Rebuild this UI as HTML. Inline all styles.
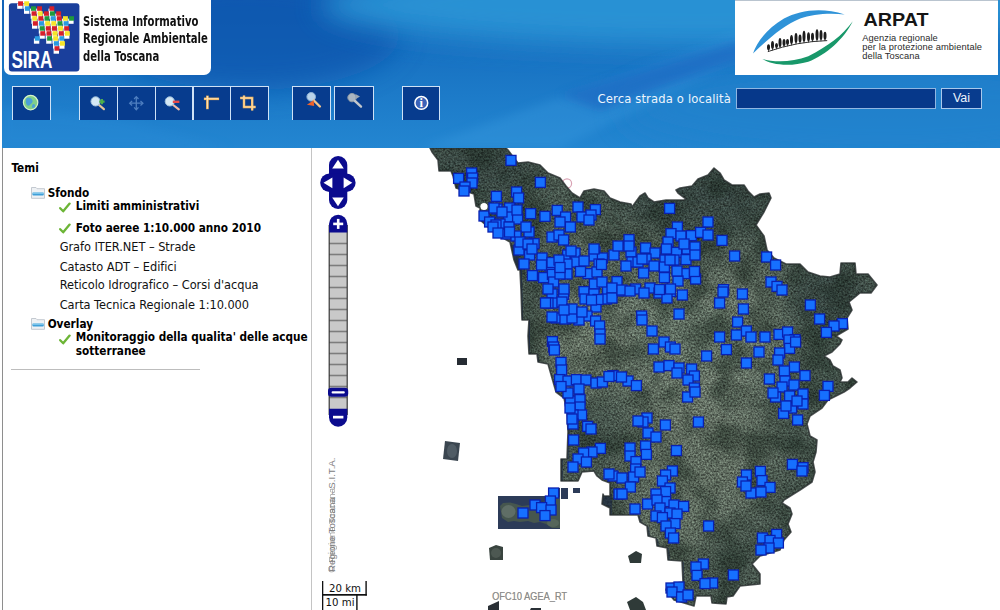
<!DOCTYPE html>
<html lang="it">
<head>
<meta charset="utf-8">
<title>SIRA - Sistema Informativo Regionale Ambientale della Toscana</title>
<style>
html,body{margin:0;padding:0;}
body{width:1000px;height:610px;overflow:hidden;background:#fff;position:relative;font-family:"DejaVu Sans","Liberation Sans",sans-serif;}
#hdr{position:absolute;left:2px;top:0;width:998px;height:148px;overflow:hidden;
 background:#176cc0;}
#hdr .glow{position:absolute;left:0;top:0;width:998px;height:148px;}
#sira{position:absolute;left:2px;top:-6px;width:207px;height:81px;background:#fff;border-radius:7px;}
#sira svg.sl{position:absolute;left:0;top:6px;}
#sira .txt{position:absolute;left:79.4px;top:18.8px;font:bold 14px/17.6px "DejaVu Sans Condensed","Liberation Sans",sans-serif;color:#111;white-space:nowrap;transform-origin:0 0;transform:scaleX(.80);}
#arpat{position:absolute;left:733px;top:0;width:263px;height:74.5px;background:#fff;border-top:1px solid #b9c4cf;box-sizing:border-box;overflow:hidden;}
#arpat svg{position:absolute;left:0;top:0;}
.tb{position:absolute;top:86px;height:32.6px;width:37px;background:#073c8e;border:1px solid #cfe2f6;border-bottom:none;box-sizing:content-box;}
.tb svg{position:absolute;left:0;top:0;}
#srch{position:absolute;left:595.5px;top:91.6px;font:11.6px/14px "DejaVu Sans","Liberation Sans",sans-serif;color:#eef5fd;white-space:nowrap;letter-spacing:0.14px;}
#inp{position:absolute;left:734px;top:88.4px;width:200px;height:20.4px;background:#06388a;border:1px solid #8fb6e2;box-sizing:border-box;}
#vai{position:absolute;left:939px;top:88.4px;width:41px;height:20.4px;background:#083c8e;border:1px solid #a9c9ec;box-sizing:border-box;color:#eef5fd;font:12.5px/18px "Liberation Sans",sans-serif;text-align:center;}
#left{position:absolute;left:2px;top:148px;width:310px;height:462px;border-left:1px solid #8e8e8e;border-right:1px solid #c4c4c4;box-sizing:border-box;background:#fff;}
#left div{position:absolute;white-space:nowrap;color:#000;font-size:11.5px;line-height:14px;}
#left .b{font-weight:bold;font-family:"DejaVu Sans Condensed","DejaVu Sans",sans-serif;font-size:11.7px;}
#left .n{font-family:"DejaVu Sans","Liberation Sans",sans-serif;font-size:11.4px;letter-spacing:-0.05px;color:#111;}
#left svg.ck{position:absolute;}
#left hr{position:absolute;left:8px;top:221px;width:189px;height:1px;border:0;background:#bdbdbd;margin:0;}
#map{position:absolute;left:313px;top:148px;width:687px;height:462px;overflow:hidden;background:#fff;}
#map svg.m{position:absolute;left:0;top:0;}
</style>
</head>
<body>
<div id="hdr">
 <svg class="glow" width="998" height="148" viewBox="2 0 998 148">
  <defs>
   <linearGradient id="g0" x1="0" y1="0" x2="0" y2="1"><stop offset="0" stop-color="#1262b8"/><stop offset=".5" stop-color="#1a76c5"/><stop offset="1" stop-color="#2386d1"/></linearGradient>
   <filter id="bl" x="-20%" y="-60%" width="140%" height="220%"><feGaussianBlur stdDeviation="14"/></filter>
   <filter id="bs" x="-20%" y="-60%" width="140%" height="220%"><feGaussianBlur stdDeviation="5"/></filter>
  </defs>
  <rect x="2" width="998" height="148" fill="url(#g0)"/>
  <ellipse cx="250" cy="35" rx="150" ry="55" fill="#0d54ad" opacity=".75" filter="url(#bl)"/>
  <ellipse cx="700" cy="5" rx="380" ry="42" fill="#2b94d6" opacity=".95" filter="url(#bl)"/>
  <ellipse cx="880" cy="110" rx="260" ry="50" fill="#2083cd" opacity=".7" filter="url(#bl)"/>
  <polygon points="420,148 560,148 780,40 760,25" fill="#3a9be0" opacity=".35" filter="url(#bs)"/>
  <polygon points="560,95 740,40 745,58 600,110" fill="#1558ba" opacity=".45" filter="url(#bs)"/>
  <polygon points="2,105 120,120 230,148 2,148" fill="#2a8cd8" opacity=".35" filter="url(#bs)"/>
 </svg>
 <div id="sira">
  <svg class="sl" width="80" height="76" viewBox="4 0 80 76">
<rect x="8.9" y="3.2" width="70.5" height="68.4" rx="3" fill="#1a3f9c"/>
<rect x="17.2" y="3.6" width="5.4" height="5.2" fill="#fff"/>
<rect x="23.3" y="3.6" width="5.4" height="5.2" fill="#fff"/>
<rect x="24.0" y="8.6" width="5.4" height="5.2" fill="#fff"/>
<rect x="30.1" y="8.6" width="5.4" height="5.2" fill="#fff"/>
<rect x="36.2" y="8.6" width="5.4" height="5.2" fill="#fff"/>
<rect x="48.5" y="8.6" width="5.4" height="5.2" fill="#fff"/>
<rect x="30.7" y="13.6" width="5.4" height="5.2" fill="#fff"/>
<rect x="36.9" y="13.6" width="5.4" height="5.2" fill="#fff"/>
<rect x="43.0" y="13.6" width="5.4" height="5.2" fill="#fff"/>
<rect x="49.1" y="13.6" width="5.4" height="5.2" fill="#fff"/>
<rect x="55.3" y="13.6" width="5.4" height="5.2" fill="#fff"/>
<rect x="31.4" y="18.6" width="5.4" height="5.2" fill="#fff"/>
<rect x="37.5" y="18.6" width="5.4" height="5.2" fill="#fff"/>
<rect x="43.6" y="18.6" width="5.4" height="5.2" fill="#fff"/>
<rect x="49.8" y="18.6" width="5.4" height="5.2" fill="#fff"/>
<rect x="55.9" y="18.6" width="5.4" height="5.2" fill="#fff"/>
<rect x="62.1" y="18.6" width="5.4" height="5.2" fill="#fff"/>
<rect x="68.2" y="18.6" width="5.4" height="5.2" fill="#fff"/>
<rect x="32.0" y="23.5" width="5.4" height="5.2" fill="#fff"/>
<rect x="38.1" y="23.5" width="5.4" height="5.2" fill="#fff"/>
<rect x="44.3" y="23.5" width="5.4" height="5.2" fill="#fff"/>
<rect x="50.4" y="23.5" width="5.4" height="5.2" fill="#fff"/>
<rect x="56.6" y="23.5" width="5.4" height="5.2" fill="#fff"/>
<rect x="62.7" y="23.5" width="5.4" height="5.2" fill="#fff"/>
<rect x="38.8" y="28.5" width="5.4" height="5.2" fill="#fff"/>
<rect x="44.9" y="28.5" width="5.4" height="5.2" fill="#fff"/>
<rect x="51.1" y="28.5" width="5.4" height="5.2" fill="#fff"/>
<rect x="57.2" y="28.5" width="5.4" height="5.2" fill="#fff"/>
<rect x="63.4" y="28.5" width="5.4" height="5.2" fill="#fff"/>
<rect x="39.4" y="33.5" width="5.4" height="5.2" fill="#fff"/>
<rect x="45.6" y="33.5" width="5.4" height="5.2" fill="#fff"/>
<rect x="51.7" y="33.5" width="5.4" height="5.2" fill="#fff"/>
<rect x="57.9" y="33.5" width="5.4" height="5.2" fill="#fff"/>
<rect x="64.0" y="33.5" width="5.4" height="5.2" fill="#fff"/>
<rect x="33.9" y="38.5" width="5.4" height="5.2" fill="#fff"/>
<rect x="46.2" y="38.5" width="5.4" height="5.2" fill="#fff"/>
<rect x="52.4" y="38.5" width="5.4" height="5.2" fill="#fff"/>
<rect x="58.5" y="38.5" width="5.4" height="5.2" fill="#fff"/>
<rect x="53.0" y="43.5" width="5.4" height="5.2" fill="#fff"/>
<rect x="59.1" y="43.5" width="5.4" height="5.2" fill="#fff"/>
<rect x="53.6" y="48.5" width="5.4" height="5.2" fill="#fff"/>
<rect x="18.1" y="1.3" width="4.9" height="4.5" fill="#d6202a"/>
<rect x="24.2" y="1.3" width="4.9" height="4.5" fill="#f6e52a"/>
<rect x="24.9" y="6.3" width="4.9" height="4.5" fill="#2a9be0"/>
<rect x="31.0" y="6.3" width="4.9" height="4.5" fill="#1f9a3c"/>
<rect x="37.1" y="6.3" width="4.9" height="4.5" fill="#d6202a"/>
<rect x="49.4" y="6.3" width="4.9" height="4.5" fill="#d6202a"/>
<rect x="31.6" y="11.3" width="4.9" height="4.5" fill="#d6202a"/>
<rect x="37.8" y="11.3" width="4.9" height="4.5" fill="#f6e52a"/>
<rect x="43.9" y="11.3" width="4.9" height="4.5" fill="#d6202a"/>
<rect x="50.0" y="11.3" width="4.9" height="4.5" fill="#1f9a3c"/>
<rect x="56.2" y="11.3" width="4.9" height="4.5" fill="#d6202a"/>
<rect x="32.3" y="16.2" width="4.9" height="4.5" fill="#f6e52a"/>
<rect x="38.4" y="16.2" width="4.9" height="4.5" fill="#d6202a"/>
<rect x="44.5" y="16.2" width="4.9" height="4.5" fill="#1f9a3c"/>
<rect x="50.7" y="16.2" width="4.9" height="4.5" fill="#2a9be0"/>
<rect x="56.8" y="16.2" width="4.9" height="4.5" fill="#d6202a"/>
<rect x="63.0" y="16.2" width="4.9" height="4.5" fill="#f6e52a"/>
<rect x="69.1" y="16.2" width="4.9" height="4.5" fill="#1f9a3c"/>
<rect x="32.9" y="21.2" width="4.9" height="4.5" fill="#d6202a"/>
<rect x="39.0" y="21.2" width="4.9" height="4.5" fill="#2a9be0"/>
<rect x="45.2" y="21.2" width="4.9" height="4.5" fill="#f6e52a"/>
<rect x="51.3" y="21.2" width="4.9" height="4.5" fill="#f6e52a"/>
<rect x="57.5" y="21.2" width="4.9" height="4.5" fill="#1f9a3c"/>
<rect x="63.6" y="21.2" width="4.9" height="4.5" fill="#2a9be0"/>
<rect x="39.7" y="26.2" width="4.9" height="4.5" fill="#1f9a3c"/>
<rect x="45.8" y="26.2" width="4.9" height="4.5" fill="#d6202a"/>
<rect x="52.0" y="26.2" width="4.9" height="4.5" fill="#d6202a"/>
<rect x="58.1" y="26.2" width="4.9" height="4.5" fill="#f6e52a"/>
<rect x="64.2" y="26.2" width="4.9" height="4.5" fill="#d6202a"/>
<rect x="40.3" y="31.2" width="4.9" height="4.5" fill="#d6202a"/>
<rect x="46.5" y="31.2" width="4.9" height="4.5" fill="#d6202a"/>
<rect x="52.6" y="31.2" width="4.9" height="4.5" fill="#f6e52a"/>
<rect x="58.8" y="31.2" width="4.9" height="4.5" fill="#d6202a"/>
<rect x="64.9" y="31.2" width="4.9" height="4.5" fill="#f6e52a"/>
<rect x="34.8" y="36.2" width="4.9" height="4.5" fill="#2a9be0"/>
<rect x="47.1" y="36.2" width="4.9" height="4.5" fill="#1f9a3c"/>
<rect x="53.2" y="36.2" width="4.9" height="4.5" fill="#f6e52a"/>
<rect x="59.4" y="36.2" width="4.9" height="4.5" fill="#2a9be0"/>
<rect x="53.9" y="41.2" width="4.9" height="4.5" fill="#2a9be0"/>
<rect x="60.0" y="41.2" width="4.9" height="4.5" fill="#f6e52a"/>
<rect x="54.5" y="46.2" width="4.9" height="4.5" fill="#d6202a"/>
<text x="11.4" y="68.4" font-family="Liberation Sans, sans-serif" font-weight="bold" font-size="23" fill="#fff" textLength="41" lengthAdjust="spacingAndGlyphs">SIRA</text>
</svg>
  <div class="txt">Sistema Informativo<br>Regionale Ambientale<br>della Toscana</div>
 </div>
 <div id="arpat">
  <svg width="263" height="75" viewBox="735 0 263 75">
   <path d="M753,52.6 C757,40 768,27 784,17.5 C800,9 822,6 844.7,13.5 C830,11.5 812,13 800.2,17.5 C784,24 768,38 753,52.6 Z" fill="#2f93d8"/>
   <path d="M762.4,58 C772,64 790,66 808.3,60.7 C826,54 844,38 852.8,20.2 C842,35 828,45 808.3,55.3 C792,61.5 774,61.5 762.4,58 Z" fill="#18986a"/>
   <path d="M767.8,50.6 Q797,40.5 827.2,39.6" fill="none" stroke="#1c1c1c" stroke-width=".9"/>
   <ellipse cx="768.5" cy="46.3" rx="1.5" ry="3.0" fill="#1c1c1c"/>
   <rect x="768.1" y="48.6" width=".7" height="2" fill="#1c1c1c"/>
   <ellipse cx="772.5" cy="44.1" rx="1.5" ry="4.0" fill="#1c1c1c"/>
   <rect x="772.1" y="47.4" width=".7" height="2" fill="#1c1c1c"/>
   <ellipse cx="776.5" cy="44.4" rx="1.5" ry="2.5" fill="#1c1c1c"/>
   <rect x="776.1" y="46.2" width=".7" height="2" fill="#1c1c1c"/>
   <ellipse cx="780.0" cy="41.4" rx="1.5" ry="4.5" fill="#1c1c1c"/>
   <rect x="779.6" y="45.2" width=".7" height="2" fill="#1c1c1c"/>
   <ellipse cx="784.0" cy="41.4" rx="1.5" ry="3.5" fill="#1c1c1c"/>
   <rect x="783.6" y="44.2" width=".7" height="2" fill="#1c1c1c"/>
   <ellipse cx="787.5" cy="41.0" rx="1.5" ry="3.0" fill="#1c1c1c"/>
   <rect x="787.1" y="43.3" width=".7" height="2" fill="#1c1c1c"/>
   <ellipse cx="791.5" cy="38.6" rx="1.5" ry="4.5" fill="#1c1c1c"/>
   <rect x="791.1" y="42.4" width=".7" height="2" fill="#1c1c1c"/>
   <ellipse cx="796.0" cy="37.1" rx="1.5" ry="5.0" fill="#1c1c1c"/>
   <rect x="795.6" y="41.4" width=".7" height="2" fill="#1c1c1c"/>
   <ellipse cx="800.0" cy="37.4" rx="1.5" ry="4.0" fill="#1c1c1c"/>
   <rect x="799.6" y="40.7" width=".7" height="2" fill="#1c1c1c"/>
   <ellipse cx="804.0" cy="35.3" rx="1.5" ry="5.5" fill="#1c1c1c"/>
   <rect x="803.6" y="40.1" width=".7" height="2" fill="#1c1c1c"/>
   <ellipse cx="808.5" cy="35.7" rx="1.5" ry="4.5" fill="#1c1c1c"/>
   <rect x="808.1" y="39.5" width=".7" height="2" fill="#1c1c1c"/>
   <ellipse cx="812.5" cy="35.8" rx="1.5" ry="4.0" fill="#1c1c1c"/>
   <rect x="812.1" y="39.1" width=".7" height="2" fill="#1c1c1c"/>
   <ellipse cx="817.0" cy="33.8" rx="1.5" ry="5.5" fill="#1c1c1c"/>
   <rect x="816.6" y="38.6" width=".7" height="2" fill="#1c1c1c"/>
   <ellipse cx="821.0" cy="34.0" rx="1.5" ry="5.0" fill="#1c1c1c"/>
   <rect x="820.6" y="38.3" width=".7" height="2" fill="#1c1c1c"/>
   <ellipse cx="825.0" cy="34.7" rx="1.5" ry="4.0" fill="#1c1c1c"/>
   <rect x="824.6" y="38.0" width=".7" height="2" fill="#1c1c1c"/>
   <text x="863.6" y="24.8" font-family="Liberation Sans, sans-serif" font-weight="bold" font-size="18.3" fill="#151515" textLength="65" lengthAdjust="spacingAndGlyphs">ARPAT</text>
   <g font-family="Liberation Sans, sans-serif" font-size="9.3" fill="#2a2a2a">
    <text x="862.3" y="39.7" textLength="75.4" lengthAdjust="spacing">Agenzia regionale</text>
    <text x="862.3" y="49.1" textLength="119.7" lengthAdjust="spacing">per la protezione ambientale</text>
    <text x="862.3" y="58.3" textLength="57.4" lengthAdjust="spacing">della Toscana</text>
   </g>
  </svg>
 </div>
 <div class="tb" style="left:10.2px;width:36.6px"><svg width="36.6" height="33" viewBox="13.2 87 36.6 33"><circle cx="30.8" cy="102.6" r="7.2" fill="#7fd08a" stroke="#d9f5c8" stroke-width="1.2"/><path d="M27,98 q3,-1 5,1 q2,3 -1,5 q-2,3 -4,1 q-2,-4 0,-7z" fill="#4aa0d8"/><path d="M33,104 q3,0 2,3 q-2,2 -3,0z" fill="#4aa0d8"/></svg></div>
 <div class="tb" style="left:77.4px;width:36.7px"><svg width="36.7" height="33" viewBox="80.4 87 36.7 33"><path d="M99.5,105 L104.3,109.2" stroke="#e8c79a" stroke-width="2.2" stroke-linecap="round"/><circle cx="96.0" cy="101.4" r="4.6" fill="#d4e8f5" stroke="#9fc0dc" stroke-width="1"/><path d="M99.6,101.6 h5.4 M102.3,98.9 v5.4" stroke="#4db04a" stroke-width="2.2"/></svg></div>
 <div class="tb" style="left:115.1px;width:36.7px"><svg width="36.7" height="33" viewBox="118.1 87 36.7 33"><g fill="none" stroke="#4f7fc0" stroke-width="1.3"><path d="M136.4,97 v12.4 M130.2,103.2 h12.4"/><path d="M134.2,99 l2.2,-2.4 l2.2,2.4 M134.2,107.4 l2.2,2.4 l2.2,-2.4 M132.2,101 l-2.4,2.2 l2.4,2.2 M140.6,101 l2.4,2.2 l-2.4,2.2"/></g></svg></div>
 <div class="tb" style="left:152.8px;width:36.7px"><svg width="36.7" height="33" viewBox="155.8 87 36.7 33"><path d="M173,105 L178.6,109.4" stroke="#f0b9a8" stroke-width="2.2" stroke-linecap="round"/><circle cx="169.6" cy="101.4" r="4.6" fill="#d4e8f5" stroke="#9fc0dc" stroke-width="1"/><path d="M172.6,101.8 h6.6" stroke="#e84a4a" stroke-width="2.4"/></svg></div>
 <div class="tb" style="left:190.5px;width:36.7px"><svg width="36.7" height="33" viewBox="193.5 87 36.7 33"><g fill="#f7b75c"><rect x="205.6" y="95.6" width="2.6" height="13.6"/><rect x="203.4" y="97.6" width="15.2" height="2.5"/></g><g fill="#fde6c0"><rect x="206.4" y="96" width="1" height="12.6"/><rect x="204" y="98.3" width="14" height=".9"/></g></svg></div>
 <div class="tb" style="left:228.2px;width:36.8px"><svg width="36.8" height="33" viewBox="231.2 87 36.8 33"><g fill="none" stroke="#f7b75c" stroke-width="2.4"><path d="M240.4,98 H252.4 V110.4"/><path d="M244.2,95.6 V107 H255.8"/></g><g fill="none" stroke="#fde6c0" stroke-width=".8"><path d="M240.4,98 H252.4 V110.4"/><path d="M244.2,95.6 V107 H255.8"/></g></svg></div>
 <div class="tb" style="left:289.6px;width:37.0px"><svg width="37.0" height="33" viewBox="292.6 87 37.0 33"><circle cx="310.8" cy="96.8" r="4.3" fill="#b9d3ea" stroke="#8fb2d6" stroke-width="1"/><path d="M313.5,100.5 L319.5,106.5" stroke="#f3c58c" stroke-width="2.4" stroke-linecap="round"/><path d="M306.5,104.8 L313.2,100.2 L313.8,106 Z" fill="#f0622a"/></svg></div>
 <div class="tb" style="left:332.2px;width:38.0px"><svg width="38.0" height="33" viewBox="335.2 87 38.0 33"><circle cx="352.2" cy="97.6" r="4.2" fill="#aab6c2" stroke="#8d99a6" stroke-width="1"/><path d="M355.2,101 L361.2,106.6" stroke="#c2c7cc" stroke-width="2.4" stroke-linecap="round"/><path d="M355.6,94 l4.6,2.6 l-4.6,2.6z" fill="#9aa6b3"/></svg></div>
 <div class="tb" style="left:399.6px;width:36.6px"><svg width="36.6" height="33" viewBox="402.6 87 36.6 33"><circle cx="420.9" cy="102.9" r="6.4" fill="#3b63b8" stroke="#fff" stroke-width="1.5"/><text x="420.9" y="107.4" text-anchor="middle" font-family="Liberation Serif, serif" font-weight="bold" font-size="12.5" fill="#fff">i</text></svg></div>
 <div id="srch">Cerca strada o località</div>
 <div id="inp"></div>
 <div id="vai">Vai</div>
</div>
<div id="left">
 <div class="b" style="left:8.5px;top:12.8px">Temi</div>
 <svg class="ck" style="left:27px;top:38px" width="16" height="14" viewBox="0 0 16 14"><path d="M1.5 1.5 h4.5 l1 1.2 h7.5 v9.6 h-13 z" fill="#eef1f4" stroke="#c3c9d0" stroke-width="1"/><rect x="2.4" y="6.6" width="11.4" height="3" rx="1" fill="#3f9fd8"/><rect x="2.4" y="6.6" width="11.4" height="1.2" rx=".6" fill="#8fd0f0"/></svg>
 <div class="b" style="left:44.7px;top:37.6px">Sfondo</div>
 <svg class="ck" style="left:56px;top:54px" width="12" height="11" viewBox="0 0 12 11"><path d="M1.2 6.2 L4.2 9.3 L10.6 1.6" fill="none" stroke="#6cb536" stroke-width="2.3" stroke-linecap="round" stroke-linejoin="round"/></svg>
 <div class="b" style="left:72.8px;top:51.3px">Limiti amministrativi</div>
 <svg class="ck" style="left:56px;top:75px" width="12" height="11" viewBox="0 0 12 11"><path d="M1.2 6.2 L4.2 9.3 L10.6 1.6" fill="none" stroke="#6cb536" stroke-width="2.3" stroke-linecap="round" stroke-linejoin="round"/></svg>
 <div class="b" style="left:72.8px;top:72.6px">Foto aeree 1:10.000 anno 2010</div>
 <div class="n" style="left:56.7px;top:91.7px">Grafo ITER.NET – Strade</div>
 <div class="n" style="left:56.7px;top:111.6px">Catasto ADT – Edifici</div>
 <div class="n" style="left:56.7px;top:130.4px">Reticolo Idrografico – Corsi d'acqua</div>
 <div class="n" style="left:56.7px;top:149.5px">Carta Tecnica Regionale 1:10.000</div>
 <svg class="ck" style="left:27px;top:169px" width="16" height="14" viewBox="0 0 16 14"><path d="M1.5 1.5 h4.5 l1 1.2 h7.5 v9.6 h-13 z" fill="#eef1f4" stroke="#c3c9d0" stroke-width="1"/><rect x="2.4" y="6.6" width="11.4" height="3" rx="1" fill="#3f9fd8"/><rect x="2.4" y="6.6" width="11.4" height="1.2" rx=".6" fill="#8fd0f0"/></svg>
 <div class="b" style="left:44.7px;top:168.5px">Overlay</div>
 <svg class="ck" style="left:56px;top:186px" width="12" height="11" viewBox="0 0 12 11"><path d="M1.2 6.2 L4.2 9.3 L10.6 1.6" fill="none" stroke="#6cb536" stroke-width="2.3" stroke-linecap="round" stroke-linejoin="round"/></svg>
 <div class="b" style="left:72.8px;top:183.4px;line-height:13.2px">Monitoraggio della qualita' delle acque<br>sotterranee</div>
 <hr>
</div>
<div id="map">
<svg class="m" width="687" height="462" viewBox="313 148 687 462">
<defs>
<clipPath id="lc"><polygon points="430,148 506,148 508,150 514,158 518,163 528,162 540,165 548,173 560,178 566,186 572,193 580,198 584,191 594,189 604,191 610,198 620,202 631,204 632,207 640,196 645,193 648,198 654,202 666,200 684,200 686,199 678,193 676,190 680,188 692,186 698,179 708,175 714,168 720,173 724,180 732,185 744,185 748,191 754,197 760,194 769,193 771,198 764,212 756,225 764,236 767,250 774,258 786,264 800,264 806,270 808,272 820,276 830,277 840,274 841,263 855,263 856,274 868,274 877,285 871,293 860,293 849,302 852,310 847,318 848,329 836,336 842,340 840,344 832,352 824,356 830,360 833,366 840,370 842,378 840,382 848,382 852,378 857,382 850,388 844,392 836,396 828,400 822,408 810,416 807,424 810,436 817,440 816,452 813,462 815,472 812,482 800,490 784,500 782,503 790,508 792,514 788,524 791,532 784,540 780,550 760,556 752,564 760,574 760,584 740,586 733,596 727,597 726,604 712,603 711,596 696,596 694,606 674,600 666,590 668,584 683,582 682,561 668,560 667,548 657,546 656,538 648,536 647,526 640,522 638,515 610,515 610,508 602,504 603,494 604,496 610,496 610,483 602,480 597,476 594,471 582,472 578,481 561,481 561,459 567,459 568,432 567,412 564,398 556,392 552,378 548,364 538,362 537,354 529,354 528,336 529,320 522,320 521,290 520,270 518,270 514,260 510,242 496,234 480,220 480,208 476,206 474,194 456,188 453,176 451,171 439,171 438,160 432,152"/></clipPath>
<filter id="nz" x="0" y="0" width="100%" height="100%" color-interpolation-filters="sRGB"><feTurbulence type="fractalNoise" baseFrequency="0.55" numOctaves="2" seed="7" result="t"/><feColorMatrix in="t" type="matrix" values="1.5 0 0 0 -0.23  1.5 0 0 0 -0.23  1.5 0 0 0 -0.23  0 0 0 0 1"/></filter>
<filter id="nz2" x="0" y="0" width="100%" height="100%" color-interpolation-filters="sRGB"><feTurbulence type="fractalNoise" baseFrequency="0.035" numOctaves="2" seed="3" result="t"/><feColorMatrix in="t" type="matrix" values="0 0 0 0 0.1  0 0 0 0 0.15  0 0 0 0 0.12  0 3 0 0 -1.2"/></filter>
<filter id="b6"><feGaussianBlur stdDeviation="14"/></filter>
</defs>
<circle cx="567" cy="183.5" r="4.6" fill="none" stroke="#d9a3b4" stroke-width="1.2"/>
<rect x="498" y="496" width="62" height="33" fill="#2c3b58"/>
<rect x="548" y="488" width="12" height="8" fill="#2c3b58"/>
<rect x="561" y="488" width="7" height="11" fill="#2c3b58"/>
<rect x="573" y="488" width="7" height="5" fill="#2c3b58"/>
<rect x="457" y="358" width="10" height="7" fill="#262c33"/>
<polygon points="445,441 460,443 458,461 443,459" fill="#3b4650"/>
<polygon points="489,548 496,545 503,547 503,560 490,560" fill="#39443f"/>
<polygon points="488,610 488,606 499,601 499,610" fill="#2a3036"/>
<polygon points="628,556 636,551 642,554 641,563 630,563" fill="#2f3a38"/>
<polygon points="627,602 636,597 643,602 646,610 630,610" fill="#2f3a38"/>
<polygon points="530,610 531,608 541,608 541,610" fill="#2a3036"/>
<g clip-path="url(#lc)">
<rect x="420" y="148" width="470" height="462" fill="#45534b"/>
<ellipse cx="690" cy="340" rx="100" ry="70" fill="#6b776a" opacity="0.75" filter="url(#b6)"/>
<ellipse cx="700" cy="450" rx="75" ry="85" fill="#677366" opacity="0.7" filter="url(#b6)"/>
<ellipse cx="585" cy="340" rx="42" ry="60" fill="#6a7668" opacity="0.75" filter="url(#b6)"/>
<ellipse cx="650" cy="545" rx="55" ry="45" fill="#637062" opacity="0.65" filter="url(#b6)"/>
<ellipse cx="600" cy="250" rx="70" ry="24" fill="#5d695d" opacity="0.55" filter="url(#b6)"/>
<ellipse cx="745" cy="285" rx="45" ry="32" fill="#5d695d" opacity="0.5" filter="url(#b6)"/>
<ellipse cx="480" cy="170" rx="60" ry="30" fill="#33413c" opacity="0.7" filter="url(#b6)"/>
<ellipse cx="700" cy="195" rx="80" ry="35" fill="#33413c" opacity="0.7" filter="url(#b6)"/>
<ellipse cx="830" cy="295" rx="40" ry="35" fill="#33413c" opacity="0.7" filter="url(#b6)"/>
<ellipse cx="830" cy="370" rx="25" ry="40" fill="#36443e" opacity="0.5" filter="url(#b6)"/>
<rect x="420" y="148" width="470" height="462" filter="url(#nz2)" opacity=".5"/>
<rect x="420" y="148" width="470" height="462" filter="url(#nz)" opacity=".5" style="mix-blend-mode:overlay"/>
<polygon points="511,245 519,245 519,262 522,270 523,320 530,320 530,354 538,354 539,362 548,364 552,378 548,380 540,366 532,358 526,340 525,322 519,322 518,272 511,262" fill="#1f2d48" opacity=".85"/>
<polygon points="556,392 566,398 569,412 570,432 569,459 563,459 563,481 560,481 560,459 566,459 567,432 566,412 563,398" fill="#1f2d48" opacity=".6"/>
<polygon points="602,494 612,494 612,516 640,516 642,523 649,527 650,536 658,539 659,546 669,548 670,560 684,562 684,582 680,582 680,564 666,563 665,551 655,549 654,541 646,539 645,529 638,525 636,519 608,519 608,510 602,506" fill="#1f2d48" opacity=".6"/>
</g>
<polygon points="430,148 506,148 508,150 514,158 518,163 528,162 540,165 548,173 560,178 566,186 572,193 580,198 584,191 594,189 604,191 610,198 620,202 631,204 632,207 640,196 645,193 648,198 654,202 666,200 684,200 686,199 678,193 676,190 680,188 692,186 698,179 708,175 714,168 720,173 724,180 732,185 744,185 748,191 754,197 760,194 769,193 771,198 764,212 756,225 764,236 767,250 774,258 786,264 800,264 806,270 808,272 820,276 830,277 840,274 841,263 855,263 856,274 868,274 877,285 871,293 860,293 849,302 852,310 847,318 848,329 836,336 842,340 840,344 832,352 824,356 830,360 833,366 840,370 842,378 840,382 848,382 852,378 857,382 850,388 844,392 836,396 828,400 822,408 810,416 807,424 810,436 817,440 816,452 813,462 815,472 812,482 800,490 784,500 782,503 790,508 792,514 788,524 791,532 784,540 780,550 760,556 752,564 760,574 760,584 740,586 733,596 727,597 726,604 712,603 711,596 696,596 694,606 674,600 666,590 668,584 683,582 682,561 668,560 667,548 657,546 656,538 648,536 647,526 640,522 638,515 610,515 610,508 602,504 603,494 604,496 610,496 610,483 602,480 597,476 594,471 582,472 578,481 561,481 561,459 567,459 568,432 567,412 564,398 556,392 552,378 548,364 538,362 537,354 529,354 528,336 529,320 522,320 521,290 520,270 518,270 514,260 510,242 496,234 480,220 480,208 476,206 474,194 456,188 453,176 451,171 439,171 438,160 432,152" fill="none" stroke="#272d2d" stroke-width="1.6" stroke-linejoin="round" opacity=".8"/>
<polygon points="500,506 503,503 510,502.5 516,504 522,506 530,505 540,503 548,500 554,497 560,497 560,528 552,528 546,524 540,522 534,523 528,521 520,522 514,521 508,522 502,518" fill="#46564e"/>
<ellipse cx="508.5" cy="511.5" rx="7" ry="6.5" fill="#5f6e66"/>
<ellipse cx="553" cy="523" rx="6" ry="4" fill="#56665b"/>
<ellipse cx="452" cy="451" rx="5" ry="7" fill="#56626a" opacity=".8"/>
<ellipse cx="496" cy="553" rx="5" ry="5" fill="#525e58" opacity=".8"/>
<circle cx="484" cy="206.5" r="3.6" fill="#fff"/>
<g fill="#1670ff" stroke="#0a20b0" stroke-width="1.3">
<rect x="506" y="155.4" width="10" height="10"/>
<rect x="466.6" y="168" width="10" height="10"/>
<rect x="467.6" y="173" width="10" height="10"/>
<rect x="453.6" y="173.4" width="10" height="10"/>
<rect x="467" y="178" width="10" height="10"/>
<rect x="460" y="182" width="10" height="10"/>
<rect x="459" y="186" width="10" height="10"/>
<rect x="535.4" y="177.4" width="10" height="10"/>
<rect x="511.6" y="187" width="10" height="10"/>
<rect x="513.6" y="193" width="10" height="10"/>
<rect x="491.4" y="191.4" width="10" height="10"/>
<rect x="573" y="202" width="10" height="10"/>
<rect x="590.4" y="204.6" width="10" height="10"/>
<rect x="552.2" y="205.4" width="10" height="10"/>
<rect x="525.6" y="208.6" width="10" height="10"/>
<rect x="540" y="211.4" width="10" height="10"/>
<rect x="560.6" y="212" width="10" height="10"/>
<rect x="577" y="212" width="10" height="10"/>
<rect x="586" y="210" width="10" height="10"/>
<rect x="565.4" y="222" width="10" height="10"/>
<rect x="555" y="217" width="10" height="10"/>
<rect x="504.6" y="203" width="10" height="10"/>
<rect x="492" y="204" width="10" height="10"/>
<rect x="479" y="211" width="10" height="10"/>
<rect x="484.6" y="217" width="10" height="10"/>
<rect x="503.6" y="212" width="10" height="10"/>
<rect x="512.6" y="214" width="10" height="10"/>
<rect x="495" y="219" width="10" height="10"/>
<rect x="504" y="222" width="10" height="10"/>
<rect x="524" y="227" width="10" height="10"/>
<rect x="521" y="222" width="10" height="10"/>
<rect x="501" y="229" width="10" height="10"/>
<rect x="511" y="231" width="10" height="10"/>
<rect x="547" y="232" width="10" height="10"/>
<rect x="554" y="230" width="10" height="10"/>
<rect x="558.6" y="235" width="10" height="10"/>
<rect x="529" y="238.6" width="10" height="10"/>
<rect x="514" y="245" width="10" height="10"/>
<rect x="524.6" y="250" width="10" height="10"/>
<rect x="537" y="253" width="10" height="10"/>
<rect x="519" y="259" width="10" height="10"/>
<rect x="562.6" y="250" width="10" height="10"/>
<rect x="570" y="248" width="10" height="10"/>
<rect x="571" y="257" width="10" height="10"/>
<rect x="562" y="259" width="10" height="10"/>
<rect x="590" y="247" width="10" height="10"/>
<rect x="589" y="251" width="10" height="10"/>
<rect x="597.4" y="253" width="10" height="10"/>
<rect x="594" y="259" width="10" height="10"/>
<rect x="609" y="250" width="10" height="10"/>
<rect x="613" y="241" width="10" height="10"/>
<rect x="579" y="256" width="10" height="10"/>
<rect x="545" y="261" width="10" height="10"/>
<rect x="489" y="203" width="10" height="10"/>
<rect x="497" y="207" width="10" height="10"/>
<rect x="491" y="220" width="10" height="10"/>
<rect x="515" y="237" width="10" height="10"/>
<rect x="523" y="239" width="10" height="10"/>
<rect x="664.6" y="203.4" width="10" height="10"/>
<rect x="703" y="217" width="10" height="10"/>
<rect x="672.4" y="222" width="10" height="10"/>
<rect x="666" y="228.6" width="10" height="10"/>
<rect x="676" y="231" width="10" height="10"/>
<rect x="686.4" y="230.6" width="10" height="10"/>
<rect x="695.6" y="227.4" width="10" height="10"/>
<rect x="703" y="230" width="10" height="10"/>
<rect x="717" y="235.4" width="10" height="10"/>
<rect x="729.6" y="251" width="10" height="10"/>
<rect x="761.6" y="252" width="10" height="10"/>
<rect x="770.6" y="260" width="10" height="10"/>
<rect x="624" y="234.6" width="10" height="10"/>
<rect x="663" y="237" width="10" height="10"/>
<rect x="640.6" y="243" width="10" height="10"/>
<rect x="661.4" y="244" width="10" height="10"/>
<rect x="682" y="244" width="10" height="10"/>
<rect x="690" y="242" width="10" height="10"/>
<rect x="671.6" y="247.4" width="10" height="10"/>
<rect x="626" y="247" width="10" height="10"/>
<rect x="650" y="248" width="10" height="10"/>
<rect x="641" y="254" width="10" height="10"/>
<rect x="627" y="257" width="10" height="10"/>
<rect x="681" y="254.6" width="10" height="10"/>
<rect x="690" y="250" width="10" height="10"/>
<rect x="660" y="255" width="10" height="10"/>
<rect x="659.4" y="262" width="10" height="10"/>
<rect x="669" y="255" width="10" height="10"/>
<rect x="633" y="257" width="10" height="10"/>
<rect x="621" y="261" width="10" height="10"/>
<rect x="649" y="261" width="10" height="10"/>
<rect x="624" y="241" width="10" height="10"/>
<rect x="679" y="239" width="10" height="10"/>
<rect x="527.4" y="270.6" width="10" height="10"/>
<rect x="538.6" y="272.6" width="10" height="10"/>
<rect x="547.4" y="269.4" width="10" height="10"/>
<rect x="562" y="269" width="10" height="10"/>
<rect x="548.6" y="277" width="10" height="10"/>
<rect x="583" y="268.6" width="10" height="10"/>
<rect x="592" y="267" width="10" height="10"/>
<rect x="589.4" y="279" width="10" height="10"/>
<rect x="612" y="276.6" width="10" height="10"/>
<rect x="579" y="286.6" width="10" height="10"/>
<rect x="602.6" y="286" width="10" height="10"/>
<rect x="614" y="286" width="10" height="10"/>
<rect x="547" y="289" width="10" height="10"/>
<rect x="558.6" y="289.4" width="10" height="10"/>
<rect x="580" y="294" width="10" height="10"/>
<rect x="601.4" y="294" width="10" height="10"/>
<rect x="547.4" y="298" width="10" height="10"/>
<rect x="557" y="297" width="10" height="10"/>
<rect x="591" y="302" width="10" height="10"/>
<rect x="543" y="298" width="10" height="10"/>
<rect x="582" y="311" width="10" height="10"/>
<rect x="551" y="313" width="10" height="10"/>
<rect x="560" y="314" width="10" height="10"/>
<rect x="574" y="315" width="10" height="10"/>
<rect x="567" y="313" width="10" height="10"/>
<rect x="590.6" y="316" width="10" height="10"/>
<rect x="594.6" y="321" width="10" height="10"/>
<rect x="595" y="329" width="10" height="10"/>
<rect x="595" y="334" width="10" height="10"/>
<rect x="547.4" y="336.6" width="10" height="10"/>
<rect x="548.6" y="342" width="10" height="10"/>
<rect x="549.4" y="345" width="10" height="10"/>
<rect x="556" y="357.4" width="10" height="10"/>
<rect x="556.6" y="365" width="10" height="10"/>
<rect x="554.6" y="374.6" width="10" height="10"/>
<rect x="563" y="376" width="10" height="10"/>
<rect x="571.4" y="374.6" width="10" height="10"/>
<rect x="581" y="375" width="10" height="10"/>
<rect x="591" y="378" width="10" height="10"/>
<rect x="597.4" y="377" width="10" height="10"/>
<rect x="608" y="370.6" width="10" height="10"/>
<rect x="574" y="384" width="10" height="10"/>
<rect x="555" y="269" width="10" height="10"/>
<rect x="597" y="277" width="10" height="10"/>
<rect x="607" y="283" width="10" height="10"/>
<rect x="589" y="289" width="10" height="10"/>
<rect x="607" y="293" width="10" height="10"/>
<rect x="567" y="304" width="10" height="10"/>
<rect x="577" y="307" width="10" height="10"/>
<rect x="547" y="312" width="10" height="10"/>
<rect x="559" y="305" width="10" height="10"/>
<rect x="638.6" y="268" width="10" height="10"/>
<rect x="659.4" y="272.6" width="10" height="10"/>
<rect x="679.4" y="268.6" width="10" height="10"/>
<rect x="690.6" y="274" width="10" height="10"/>
<rect x="673" y="276" width="10" height="10"/>
<rect x="630.6" y="284" width="10" height="10"/>
<rect x="617" y="285" width="10" height="10"/>
<rect x="645" y="283" width="10" height="10"/>
<rect x="654" y="288" width="10" height="10"/>
<rect x="665.4" y="286.6" width="10" height="10"/>
<rect x="677.4" y="290" width="10" height="10"/>
<rect x="662" y="293" width="10" height="10"/>
<rect x="639" y="288" width="10" height="10"/>
<rect x="625" y="286" width="10" height="10"/>
<rect x="718.6" y="284.6" width="10" height="10"/>
<rect x="718" y="287" width="10" height="10"/>
<rect x="714.6" y="298" width="10" height="10"/>
<rect x="737.4" y="289" width="10" height="10"/>
<rect x="738.4" y="304" width="10" height="10"/>
<rect x="766" y="277" width="10" height="10"/>
<rect x="772" y="281.4" width="10" height="10"/>
<rect x="777" y="285" width="10" height="10"/>
<rect x="805.4" y="300" width="10" height="10"/>
<rect x="814.6" y="314" width="10" height="10"/>
<rect x="636.6" y="311" width="10" height="10"/>
<rect x="637" y="315" width="10" height="10"/>
<rect x="674" y="309" width="10" height="10"/>
<rect x="647" y="326" width="10" height="10"/>
<rect x="659" y="337" width="10" height="10"/>
<rect x="648.4" y="344" width="10" height="10"/>
<rect x="665.4" y="342" width="10" height="10"/>
<rect x="670" y="344" width="10" height="10"/>
<rect x="732.6" y="317" width="10" height="10"/>
<rect x="741.4" y="326" width="10" height="10"/>
<rect x="731.4" y="330" width="10" height="10"/>
<rect x="746" y="332" width="10" height="10"/>
<rect x="714.6" y="332" width="10" height="10"/>
<rect x="760" y="332" width="10" height="10"/>
<rect x="774" y="329.4" width="10" height="10"/>
<rect x="782.6" y="327" width="10" height="10"/>
<rect x="790" y="334.6" width="10" height="10"/>
<rect x="784" y="335" width="10" height="10"/>
<rect x="784.6" y="343.4" width="10" height="10"/>
<rect x="721.4" y="344.6" width="10" height="10"/>
<rect x="754" y="347" width="10" height="10"/>
<rect x="774.6" y="348" width="10" height="10"/>
<rect x="773" y="355" width="10" height="10"/>
<rect x="701.6" y="351" width="10" height="10"/>
<rect x="741.4" y="358" width="10" height="10"/>
<rect x="654" y="362" width="10" height="10"/>
<rect x="664" y="360.6" width="10" height="10"/>
<rect x="674" y="363" width="10" height="10"/>
<rect x="672" y="368" width="10" height="10"/>
<rect x="686.6" y="364" width="10" height="10"/>
<rect x="689.4" y="371" width="10" height="10"/>
<rect x="683" y="375" width="10" height="10"/>
<rect x="689.4" y="383" width="10" height="10"/>
<rect x="623" y="376" width="10" height="10"/>
<rect x="631.4" y="380.6" width="10" height="10"/>
<rect x="789.4" y="362" width="10" height="10"/>
<rect x="779.4" y="366" width="10" height="10"/>
<rect x="800" y="370.6" width="10" height="10"/>
<rect x="764.4" y="374" width="10" height="10"/>
<rect x="780" y="376" width="10" height="10"/>
<rect x="789" y="380" width="10" height="10"/>
<rect x="777" y="382" width="10" height="10"/>
<rect x="837.4" y="318.6" width="10" height="10"/>
<rect x="829" y="321" width="10" height="10"/>
<rect x="821.4" y="327.4" width="10" height="10"/>
<rect x="565.4" y="396" width="10" height="10"/>
<rect x="575" y="394.6" width="10" height="10"/>
<rect x="575" y="402" width="10" height="10"/>
<rect x="576.6" y="410" width="10" height="10"/>
<rect x="568" y="410" width="10" height="10"/>
<rect x="568" y="419" width="10" height="10"/>
<rect x="582.6" y="421.4" width="10" height="10"/>
<rect x="586" y="424" width="10" height="10"/>
<rect x="568.6" y="435" width="10" height="10"/>
<rect x="595.4" y="443.4" width="10" height="10"/>
<rect x="587" y="447" width="10" height="10"/>
<rect x="578.6" y="448" width="10" height="10"/>
<rect x="573" y="454" width="10" height="10"/>
<rect x="581.4" y="457" width="10" height="10"/>
<rect x="568" y="462" width="10" height="10"/>
<rect x="608" y="471" width="10" height="10"/>
<rect x="604" y="469" width="10" height="10"/>
<rect x="614" y="489" width="10" height="10"/>
<rect x="548.6" y="488" width="10" height="10"/>
<rect x="545.4" y="496" width="10" height="10"/>
<rect x="530" y="500" width="10" height="10"/>
<rect x="536.6" y="502.6" width="10" height="10"/>
<rect x="546" y="505" width="10" height="10"/>
<rect x="518" y="508" width="10" height="10"/>
<rect x="563" y="388" width="10" height="10"/>
<rect x="540" y="510.6" width="10" height="10"/>
<rect x="682.6" y="392" width="10" height="10"/>
<rect x="690" y="387" width="10" height="10"/>
<rect x="642" y="413" width="10" height="10"/>
<rect x="638" y="417" width="10" height="10"/>
<rect x="660.4" y="420" width="10" height="10"/>
<rect x="693.4" y="417" width="10" height="10"/>
<rect x="643" y="428" width="10" height="10"/>
<rect x="651" y="432" width="10" height="10"/>
<rect x="640.6" y="441" width="10" height="10"/>
<rect x="625" y="443" width="10" height="10"/>
<rect x="671.4" y="445.6" width="10" height="10"/>
<rect x="625" y="451" width="10" height="10"/>
<rect x="641.4" y="449.4" width="10" height="10"/>
<rect x="631" y="456.6" width="10" height="10"/>
<rect x="630.6" y="464" width="10" height="10"/>
<rect x="628.6" y="472" width="10" height="10"/>
<rect x="617" y="473" width="10" height="10"/>
<rect x="625.4" y="482" width="10" height="10"/>
<rect x="617" y="489" width="10" height="10"/>
<rect x="667.4" y="466" width="10" height="10"/>
<rect x="660.6" y="470" width="10" height="10"/>
<rect x="657.4" y="476" width="10" height="10"/>
<rect x="665" y="483" width="10" height="10"/>
<rect x="660.6" y="486.6" width="10" height="10"/>
<rect x="651" y="489" width="10" height="10"/>
<rect x="660.6" y="496.6" width="10" height="10"/>
<rect x="642.6" y="499" width="10" height="10"/>
<rect x="630" y="504" width="10" height="10"/>
<rect x="669" y="500" width="10" height="10"/>
<rect x="678.6" y="501.4" width="10" height="10"/>
<rect x="652" y="495" width="10" height="10"/>
<rect x="655" y="503" width="10" height="10"/>
<rect x="741.4" y="470" width="10" height="10"/>
<rect x="755.4" y="466.4" width="10" height="10"/>
<rect x="737.4" y="477" width="10" height="10"/>
<rect x="757" y="475.6" width="10" height="10"/>
<rect x="765" y="482.4" width="10" height="10"/>
<rect x="746" y="488" width="10" height="10"/>
<rect x="756" y="487" width="10" height="10"/>
<rect x="741" y="481" width="10" height="10"/>
<rect x="787.4" y="459.4" width="10" height="10"/>
<rect x="798" y="462.6" width="10" height="10"/>
<rect x="797" y="466" width="10" height="10"/>
<rect x="770.6" y="392" width="10" height="10"/>
<rect x="784.6" y="391" width="10" height="10"/>
<rect x="798" y="389" width="10" height="10"/>
<rect x="798" y="399" width="10" height="10"/>
<rect x="786.6" y="403" width="10" height="10"/>
<rect x="778.6" y="408.4" width="10" height="10"/>
<rect x="792.6" y="415" width="10" height="10"/>
<rect x="792" y="396" width="10" height="10"/>
<rect x="633" y="416" width="10" height="10"/>
<rect x="635" y="467" width="10" height="10"/>
<rect x="790.6" y="337" width="10" height="10"/>
<rect x="768" y="388" width="10" height="10"/>
<rect x="781" y="401" width="10" height="10"/>
<rect x="823" y="381.4" width="10" height="10"/>
<rect x="819.4" y="390.4" width="10" height="10"/>
<rect x="665" y="508" width="10" height="10"/>
<rect x="672" y="509" width="10" height="10"/>
<rect x="651" y="511" width="10" height="10"/>
<rect x="657.4" y="512.6" width="10" height="10"/>
<rect x="670" y="518.6" width="10" height="10"/>
<rect x="661" y="521" width="10" height="10"/>
<rect x="665.4" y="528" width="10" height="10"/>
<rect x="668.6" y="533" width="10" height="10"/>
<rect x="703.6" y="521" width="10" height="10"/>
<rect x="771.6" y="529.4" width="10" height="10"/>
<rect x="757.4" y="533" width="10" height="10"/>
<rect x="765" y="535.4" width="10" height="10"/>
<rect x="773.4" y="538" width="10" height="10"/>
<rect x="764" y="543" width="10" height="10"/>
<rect x="756" y="545" width="10" height="10"/>
<rect x="698.4" y="559" width="10" height="10"/>
<rect x="691" y="562" width="10" height="10"/>
<rect x="692" y="570.4" width="10" height="10"/>
<rect x="728.4" y="570" width="10" height="10"/>
<rect x="707.6" y="578" width="10" height="10"/>
<rect x="700" y="578.6" width="10" height="10"/>
<rect x="666" y="583" width="10" height="10"/>
<rect x="674" y="582" width="10" height="10"/>
<rect x="667" y="587" width="10" height="10"/>
<rect x="676.6" y="592" width="10" height="10"/>
<rect x="683" y="590" width="10" height="10"/>
<rect x="512" y="205" width="10" height="10"/>
<rect x="504.5" y="227" width="10" height="10"/>
<rect x="527" y="244" width="10" height="10"/>
<rect x="488" y="222" width="10" height="10"/>
<rect x="493" y="228" width="10" height="10"/>
<rect x="566" y="246" width="10" height="10"/>
<rect x="584" y="215" width="10" height="10"/>
<rect x="589" y="244" width="10" height="10"/>
<rect x="547" y="257.5" width="10" height="10"/>
<rect x="554" y="255" width="10" height="10"/>
<rect x="536.5" y="260" width="10" height="10"/>
<rect x="555" y="262.5" width="10" height="10"/>
<rect x="575.5" y="266.5" width="10" height="10"/>
<rect x="559" y="284" width="10" height="10"/>
<rect x="543" y="284" width="10" height="10"/>
<rect x="540.5" y="298" width="10" height="10"/>
<rect x="593" y="294.5" width="10" height="10"/>
<rect x="586.5" y="295" width="10" height="10"/>
<rect x="596.5" y="259.5" width="10" height="10"/>
<rect x="672" y="266" width="10" height="10"/>
<rect x="637" y="254" width="10" height="10"/>
<rect x="665" y="255" width="10" height="10"/>
<rect x="665.5" y="284" width="10" height="10"/>
<rect x="654.5" y="284.5" width="10" height="10"/>
<rect x="689.5" y="266.5" width="10" height="10"/>
<rect x="616.5" y="372" width="10" height="10"/>
<rect x="604" y="371.5" width="10" height="10"/>
<rect x="556" y="381.5" width="10" height="10"/>
<rect x="565" y="403" width="10" height="10"/>
<rect x="567" y="414" width="10" height="10"/>
</g>

<g>
<rect x="329" y="156" width="18.3" height="53" rx="9.1" fill="#0b0b8e"/>
<rect x="320.2" y="173.6" width="35.4" height="18.4" rx="9.2" fill="#0b0b8e"/>
<polygon points="338,159.8 343.8,168.6 332.2,168.6" fill="#fff"/>
<polygon points="338,206.2 343.8,197.4 332.2,197.4" fill="#fff"/>
<polygon points="323.5,182.8 332.4,177.4 332.4,188.2" fill="#fff"/>
<polygon points="352.3,182.8 343.6,177.4 343.6,188.2" fill="#fff"/>
<rect x="329" y="225" width="18.3" height="190" fill="#c9c9c9"/>
<rect x="329" y="242.7" width="18" height="1.6" fill="#7d7d7d"/><rect x="329" y="253.7" width="18" height="1.6" fill="#7d7d7d"/><rect x="329" y="264.7" width="18" height="1.6" fill="#7d7d7d"/><rect x="329" y="275.7" width="18" height="1.6" fill="#7d7d7d"/><rect x="329" y="286.7" width="18" height="1.6" fill="#7d7d7d"/><rect x="329" y="297.7" width="18" height="1.6" fill="#7d7d7d"/><rect x="329" y="308.7" width="18" height="1.6" fill="#7d7d7d"/><rect x="329" y="319.7" width="18" height="1.6" fill="#7d7d7d"/><rect x="329" y="330.7" width="18" height="1.6" fill="#7d7d7d"/><rect x="329" y="341.7" width="18" height="1.6" fill="#7d7d7d"/><rect x="329" y="352.7" width="18" height="1.6" fill="#7d7d7d"/><rect x="329" y="363.7" width="18" height="1.6" fill="#7d7d7d"/><rect x="329" y="374.7" width="18" height="1.6" fill="#7d7d7d"/><rect x="329" y="385.7" width="18" height="1.6" fill="#7d7d7d"/><rect x="329" y="396.7" width="18" height="1.6" fill="#7d7d7d"/>
<rect x="328.6" y="225" width="1.2" height="190" fill="#3a3a3a"/>
<rect x="346.6" y="225" width="1.2" height="190" fill="#3a3a3a"/>
<path d="M329,232.5 V224 A9.15,9.15 0 0 1 347.3,224 V232.5 Z" fill="#0b0b8e"/>
<rect x="333.2" y="222.6" width="10" height="2.6" fill="#fff"/><rect x="336.9" y="218.9" width="2.6" height="10" fill="#fff"/>
<path d="M329,408.8 V417.5 A9.15,9.15 0 0 0 347.3,417.5 V408.8 Z" fill="#0b0b8e"/>
<rect x="333" y="415.8" width="10.4" height="2.7" fill="#fff"/>
<rect x="328" y="387.8" width="20.2" height="9" rx="3.2" fill="#0b0b8e"/>
<rect x="331.6" y="391.2" width="13.2" height="2.4" rx="1" fill="#fff"/>
</g>
<g fill="#111">
<rect x="322" y="581" width="1.3" height="29"/>
<rect x="365.4" y="581" width="1.4" height="14.6"/>
<rect x="322" y="594" width="44.8" height="1.7"/>
<rect x="356.2" y="594" width="1.4" height="16"/>
</g>
<text x="329" y="592.2" font-family="DejaVu Sans, Liberation Sans, sans-serif" font-size="10.2" fill="#111">20 km</text>
<text x="325.5" y="606" font-family="DejaVu Sans, Liberation Sans, sans-serif" font-size="10.2" fill="#111">10 mi</text>
<g font-family="Liberation Sans, sans-serif" font-size="9.7" fill="#7c7c7c">
<text transform="translate(335,572) rotate(-90)">Regione Toscana - S.I.T.A.</text>
<text transform="translate(335,572.5) rotate(-90)" opacity=".75">© Regione Toscana</text>
</g>
<g font-family="Liberation Sans, sans-serif" font-size="10" fill="#8c8c8c">
<text x="492" y="600.2" textLength="75" lengthAdjust="spacingAndGlyphs">OFC10 AGEA_RT</text>
<text x="492.4" y="600.2" opacity=".6" textLength="75" lengthAdjust="spacingAndGlyphs">OFC10 AGEA_RT</text>
</g>

</svg>
</div>
</body>
</html>
